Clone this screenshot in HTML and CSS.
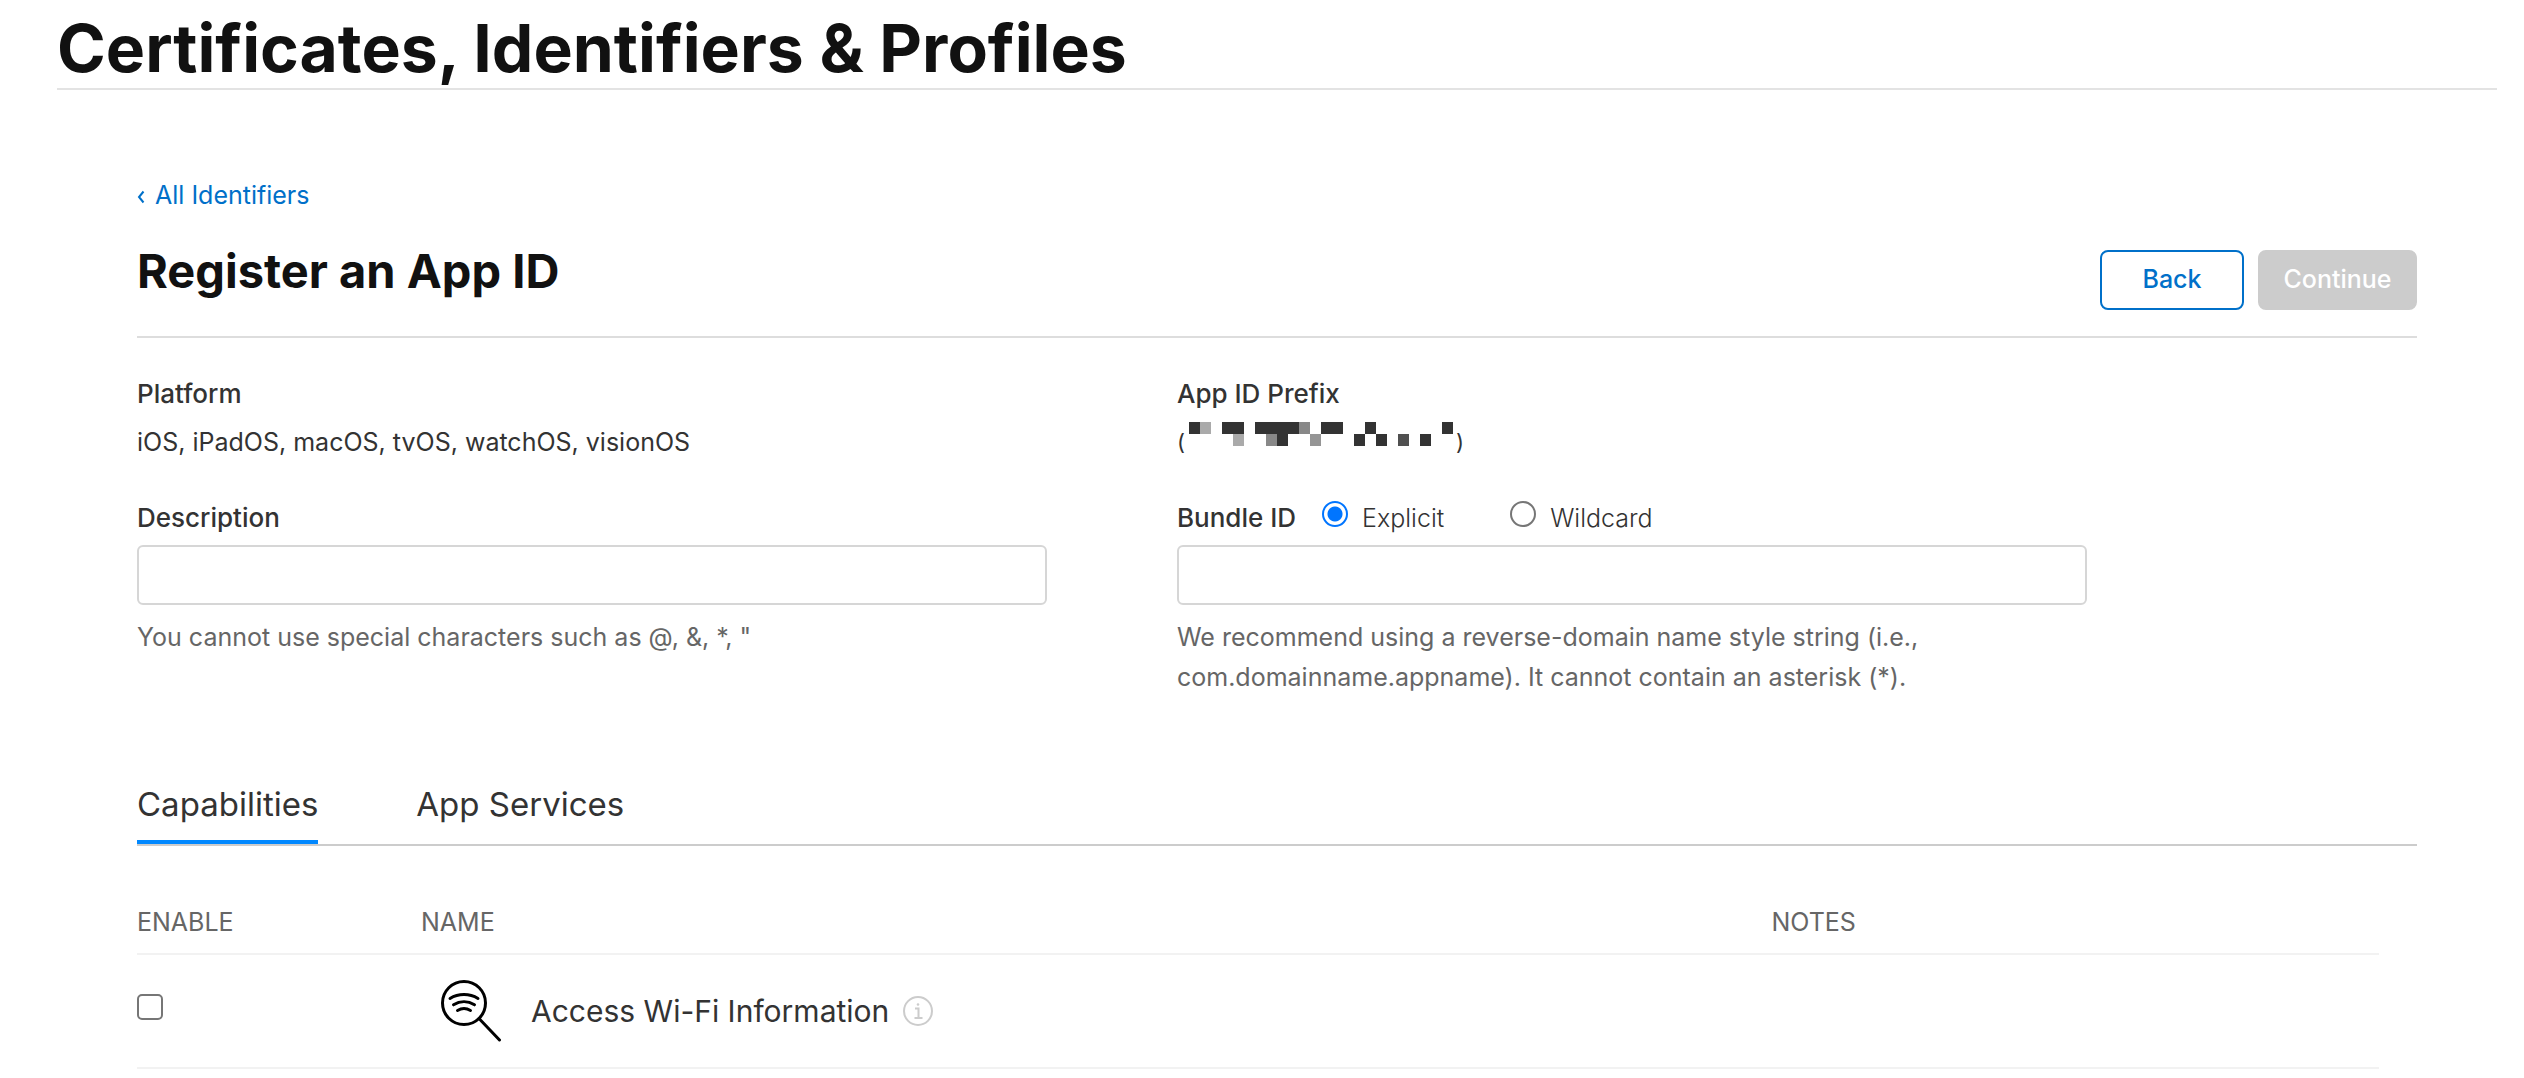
FILE: index.html
```html
<!DOCTYPE html>
<html lang="en">
<head>
<meta charset="utf-8">
<title>Certificates, Identifiers &amp; Profiles</title>
<link rel="stylesheet" href="styles.css">
</head>
<body>
<header class="page-header">
  <h1 class="page-title">Certificates, Identifiers &amp; Profiles</h1>
</header>
<main class="content">
  <a class="back-link" href="#"><svg class="chevron" viewBox="0 0 8 14" aria-hidden="true"><path d="M6.500 1.500 2 7l4.500 5.500"/></svg><span>All Identifiers</span></a>
  <div class="title-bar">
    <h2 class="section-title">Register an App ID</h2>
    <div class="actions">
      <button class="btn btn-back" type="button">Back</button>
      <button class="btn btn-continue" type="button" disabled>Continue</button>
    </div>
  </div>

  <form class="fields">
    <div class="field">
      <p class="label">Platform</p>
      <p class="value">iOS, iPadOS, macOS, tvOS, watchOS, visionOS</p>
    </div>
    <div class="field">
      <p class="label">App ID Prefix</p>
      <p class="value redacted">
        <span class="paren">(</span>
        <svg class="mosaic" viewBox="0 0 24 2" preserveAspectRatio="none" shape-rendering="crispEdges" role="img" aria-label="Hidden">
          <path fill="#333" d="M0 0h1v1H0zM3 0h2v1H3zM6 0h4v1H6zM12 0h2v1h-2zM16 0h1v1h-1zM23 0h1v1h-1zM8 1h1v1H8zM15 1h1v1h-1zM17 1h1v1h-1zM21 1h1v1h-1z"/>
          <path fill="#aaa" d="M1 0h1v1H1zM4 1h1v1H4z"/>
          <path fill="#888" d="M10 0h1v1h-1zM7 1h1v1H7z"/>
          <path fill="#959595" d="M11 1h1v1h-1z"/>
          <path fill="#505050" d="M19 1h1v1h-1z"/>
        </svg>
        <span class="paren paren-end">)</span>
      </p>
    </div>
    <div class="field">
      <div class="label-row"><label class="label" for="description">Description</label></div>
      <input class="text-input" id="description" type="text">
      <p class="hint">You cannot use special characters such as @, &amp;, *, "</p>
    </div>
    <div class="field">
      <div class="label-row">
        <label class="label" for="bundle">Bundle ID</label>
        <div class="choices">
          <label class="choice"><input class="radio" type="radio" name="kind" checked><span>Explicit</span></label>
          <label class="choice"><input class="radio" type="radio" name="kind"><span>Wildcard</span></label>
        </div>
      </div>
      <input class="text-input" id="bundle" type="text">
      <p class="hint">We recommend using a reverse-domain name style string (i.e., com.domainname.appname). It cannot contain an asterisk (*).</p>
    </div>
  </form>

  <nav class="tabs">
    <a class="tab tab-active" href="#">Capabilities</a>
    <a class="tab" href="#">App Services</a>
  </nav>

  <table class="capabilities">
    <thead>
      <tr><th class="col-enable">ENABLE</th><th>NAME</th><th class="col-notes">NOTES</th></tr>
    </thead>
    <tbody>
      <tr>
        <td class="cell-enable"><input class="checkbox" id="wifi" type="checkbox"></td>
        <td>
          <div class="capability">
            <svg class="cap-icon" viewBox="0 0 62 62" aria-hidden="true">
              <circle cx="23" cy="23" r="21.500"/>
              <path d="M38 38.500 58.500 60"/>
              <path d="M9 18.500C17.500 13.300 28.500 13.300 37 18.500M12.500 24.800c6.500-4 14.500-4 21 0M16.500 30.500c4-2.400 9-2.400 13 0"/>
            </svg>
            <label class="cap-name" for="wifi">Access Wi-Fi Information</label>
            <svg class="info" viewBox="0 0 30 30" aria-hidden="true">
              <circle cx="15" cy="15" r="14"/>
              <path d="M12 12.500H15.500V22M11.500 22h8"/>
              <circle class="dot" cx="15" cy="8.500" r="1.300"/>
            </svg>
          </div>
        </td>
        <td></td>
      </tr>
    </tbody>
  </table>
</main>
</body>
</html>
```
FILE: styles.css
```css
* { box-sizing: border-box; }

body {
  margin: 0;
  background: #fff;
  color: #333;
  font-family: Inter, "Liberation Sans", sans-serif;
  font-size: 25px;
  line-height: 40px;
}

h1, h2, p { margin: 0; }
a { color: inherit; text-decoration: none; }

.page-header {
  margin: 0 27px 0 57px;
  padding: 8px 0 0;
  border-bottom: 2px solid #e3e3e3;
}

.page-title {
  color: #111;
  font-size: 66px;
  font-weight: 700;
  line-height: 80px;
}

.content { padding: 85px 107px 0 137px; }

.back-link {
  display: flex;
  align-items: center;
  gap: 10px;
  width: fit-content;
  color: #0070c9;
}

.chevron {
  width: 8px;
  height: 14px;
  margin-top: 4px;
  fill: none;
  stroke: currentColor;
  stroke-width: 2;
}

.title-bar {
  display: flex;
  justify-content: space-between;
  align-items: flex-start;
  margin-top: 26px;
  padding-bottom: 26px;
  border-bottom: 2px solid #ddd;
}

.section-title {
  color: #111;
  font-size: 47px;
  font-weight: 700;
  line-height: 60px;
}

.actions { display: flex; gap: 14px; padding-top: 9px; }

.btn {
  height: 60px;
  padding: 0 22px 2px;
  border: 2px solid #0070c9;
  border-radius: 8px;
  background: #fff;
  color: #0070c9;
  font: inherit;
  font-weight: 500;
}

.btn-back { min-width: 144px; }
.btn-continue { min-width: 159px; border-color: #ccc; background: #ccc; color: #fff; }

.fields {
  display: grid;
  grid-template-columns: 91fr 91fr 20fr;
  column-gap: 130px;
  row-gap: 36px;
  padding-top: 36px;
}

.field:nth-child(odd) { grid-column: 1; }
.field:nth-child(even) { grid-column: 2; }
.label { font-size: 26px; font-weight: 500; }
.value { margin-top: 8px; }

.redacted { display: flex; height: 40px; }
.paren { width: 12px; font-size: 22px; }
.paren-end { margin-left: 3px; }
.mosaic { width: 264px; height: 24px; }

.label-row { display: flex; align-items: center; }
.choices { display: flex; gap: 66px; margin-left: 26px; }
.choice { display: flex; gap: 14px; font-weight: 300; }

.radio, .checkbox {
  appearance: none;
  flex: none;
  width: 26px;
  height: 26px;
  margin: 3px 0 0;
  border: 2px solid #767676;
  background: #fff;
}

.radio { border-radius: 50%; }
.radio:checked { border-color: #0075ff; background: radial-gradient(circle, #0075ff 7px, #fff 8px); }

.text-input {
  display: block;
  width: 100%;
  height: 60px;
  margin-top: 7px;
  padding: 0 16px;
  border: 2px solid #d6d6d6;
  border-radius: 6px;
  font: inherit;
}

.hint { margin-top: 12px; color: #666; }

.tabs {
  display: flex;
  gap: 98px;
  margin-top: 83px;
  border-bottom: 2px solid #ccc;
}

.tab {
  padding-bottom: 12px;
  border-bottom: 4px solid transparent;
  font-size: 33px;
  line-height: 48px;
}

.tab-active { border-bottom-color: #08f; }

.capabilities {
  width: calc(100% - 38px);
  margin-top: 56px;
  border-collapse: collapse;
  table-layout: fixed;
}

th, td {
  padding: 0;
  border-bottom: 2px solid #f2f2f2;
  text-align: left;
}

th { height: 52px; vertical-align: top; color: #666; font-weight: 400; }
td { height: 114px; }
.col-enable { width: 284px; }
.col-notes { width: 27.1%; }
.cell-enable { padding-bottom: 8px; }
.checkbox { display: block; margin: 0; border-radius: 5px; }
.capability { display: flex; align-items: center; padding-left: 20px; }

.cap-icon {
  width: 62px;
  height: 62px;
  margin-right: 28px;
  fill: none;
  stroke: #000;
  stroke-width: 3;
  stroke-linecap: round;
}

.cap-name { font-size: 30px; }
.info { width: 30px; height: 30px; margin-left: 14px; fill: none; stroke: #ccc; stroke-width: 2; }
.dot { fill: #ccc; stroke: none; }
```
